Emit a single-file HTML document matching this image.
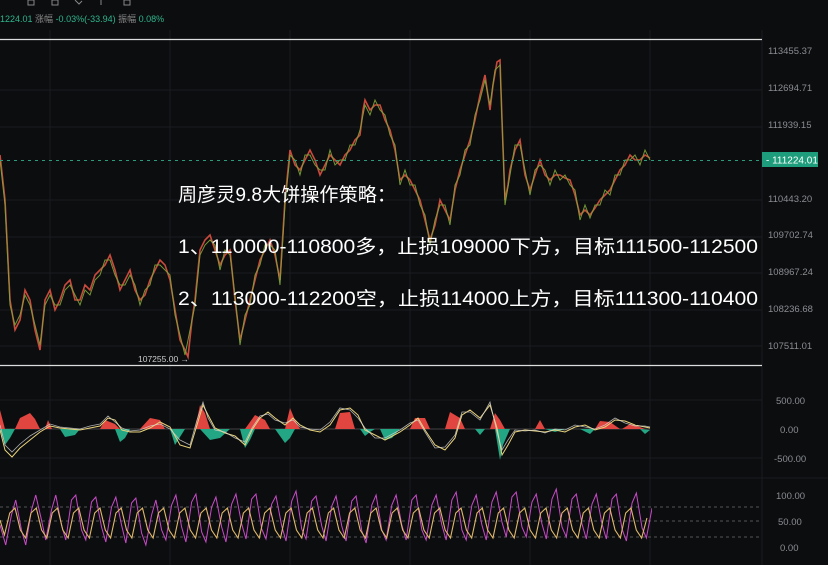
<!DOCTYPE html>
<html><head><meta charset="utf-8"><style>
html,body{margin:0;padding:0;background:#0c0d0f;width:828px;height:565px;overflow:hidden}
svg{display:block}
</style></head><body>
<svg width="828" height="565" viewBox="0 0 828 565" xmlns="http://www.w3.org/2000/svg" font-family="Liberation Sans, Noto Sans CJK SC, sans-serif">
<rect width="828" height="565" fill="#0c0d0f"/>
<g stroke="#1a1c20" stroke-width="1">
<line x1="50" y1="30" x2="50" y2="565"/><line x1="170" y1="30" x2="170" y2="565"/><line x1="290" y1="30" x2="290" y2="565"/><line x1="410" y1="30" x2="410" y2="565"/><line x1="530" y1="30" x2="530" y2="565"/><line x1="650" y1="30" x2="650" y2="565"/>
<line x1="0" y1="90" x2="762" y2="90"/><line x1="0" y1="127" x2="762" y2="127"/><line x1="0" y1="200" x2="762" y2="200"/><line x1="0" y1="237" x2="762" y2="237"/><line x1="0" y1="273" x2="762" y2="273"/><line x1="0" y1="310" x2="762" y2="310"/><line x1="0" y1="346" x2="762" y2="346"/>
<line x1="0" y1="400" x2="762" y2="400"/><line x1="0" y1="458" x2="762" y2="458"/><line x1="0" y1="478" x2="828" y2="478"/>
<line x1="762" y1="30" x2="762" y2="565"/>
</g>
<g stroke="#888" fill="none" stroke-width="1">
<rect x="28" y="0" width="6" height="5"/><rect x="52" y="0" width="6" height="5"/><path d="M75 0 l4 4 l3 -3"/><line x1="101" y1="0" x2="101" y2="5"/><rect x="124" y="0" width="6" height="5"/>
</g>
<text x="0" y="22" font-size="9" fill="#2fb58c">1224.01 <tspan fill="#888">涨幅</tspan> -0.03%(-33.94) <tspan fill="#888">振幅</tspan> 0.08%</text>
<line x1="0" y1="39.5" x2="762" y2="39.5" stroke="#ddd" stroke-width="1.2"/>
<line x1="0" y1="365.5" x2="762" y2="365.5" stroke="#ddd" stroke-width="1.2"/>
<polyline fill="none" stroke="#c84a3c" stroke-width="1.6" points="0,155 5,200 10,300 15,330 20,320 25,290 30,300 35,330 40,350 45,300 50,290 55,310 60,300 65,285 70,280 75,300 80,300 85,285 90,290 95,275 100,270 105,265 110,255 115,270 120,290 125,280 130,270 135,290 140,300 145,295 150,280 155,270 160,260 165,265 170,280 175,310 180,340 185,350 188,357 192,320 195,300 200,250 205,240 210,235 215,250 220,265 225,255 230,250 235,300 240,340 245,320 250,300 255,280 260,260 265,250 270,240 275,255 280,280 285,200 290,150 295,165 300,170 305,160 310,150 315,160 320,175 325,165 330,155 335,160 340,165 345,155 350,150 355,140 360,135 363,110 365,100 370,110 375,105 380,105 385,120 390,130 395,150 400,180 405,175 410,180 415,190 420,200 425,220 430,240 435,225 440,200 445,210 450,220 455,190 460,170 465,155 470,140 475,120 480,95 485,75 490,110 493,85 497,62 500,60 502,120 505,200 508,185 510,170 515,150 520,140 525,175 530,190 535,175 540,160 545,175 550,180 555,175 560,175 565,178 570,180 575,195 580,215 585,210 590,215 595,208 600,200 605,195 610,190 615,180 620,170 625,165 630,155 635,160 640,160 645,155 650,158"/>
<polyline fill="none" stroke="#7fa53a" stroke-width="1" opacity="0.9" points="0,160 5,205 10,305 15,325 20,315 25,295 30,305 35,325 40,345 45,305 50,295 55,305 60,305 65,290 70,285 75,295 80,305 85,290 90,295 95,280 100,275 105,260 110,260 115,275 120,285 125,285 130,275 135,285 140,305 145,290 150,285 155,265 160,265 165,270 170,275 175,315 180,335 185,355 190,330 195,305 200,255 205,245 210,240 215,245 220,270 225,250 230,255 235,295 240,345 245,315 250,305 255,275 260,265 265,245 270,245 275,250 280,285 285,205 290,155 295,160 300,175 305,155 310,155 315,165 320,170 325,170 330,150 335,165 340,160 345,160 350,145 355,145 360,130 365,105 370,115 375,100 380,110 385,115 390,135 395,145 400,185 405,170 410,185 415,185 420,205 425,215 430,245 435,220 440,205 445,205 450,225 455,185 460,175 465,150 470,145 475,115 480,100 485,80 490,105 495,70 500,65 505,205 510,175 515,145 520,145 525,170 530,195 535,170 540,165 545,170 550,185 555,170 560,180 565,175 570,185 575,190 580,220 585,205 590,218 595,205 600,205 605,190 610,195 615,175 620,175 625,160 630,160 635,155 640,165 645,150 650,160"/>
<line x1="0" y1="160.5" x2="762" y2="160.5" stroke="#2a9c7e" stroke-dasharray="3,4"/>
<rect x="762" y="152" width="56" height="15" fill="#1d9d7b"/>
<text x="766" y="163.5" font-size="10" fill="#fff">- 111224.01</text>
<g font-size="9.5" fill="#8a8d92">
<text x="768" y="54">113455.37</text><text x="768" y="91">112694.71</text><text x="768" y="128">111939.15</text><text x="768" y="202">110443.20</text><text x="768" y="238">109702.74</text><text x="768" y="275">108967.24</text><text x="768" y="312">108236.68</text><text x="768" y="349">107511.01</text>
<text x="776" y="404">500.00</text><text x="780" y="433">0.00</text><text x="774" y="462">-500.00</text>
<text x="776" y="499">100.00</text><text x="778" y="525">50.00</text><text x="780" y="551">0.00</text>
</g>
<text x="138" y="362" font-size="8.5" fill="#ccc">107255.00 →</text>
<g fill="#fff" font-size="19">
<text x="178" y="201" textLength="218" lengthAdjust="spacingAndGlyphs">周彦灵9.8大饼操作策略：</text>
<text x="178" y="253" textLength="580" lengthAdjust="spacingAndGlyphs">1、110000-110800多，止损109000下方，目标111500-112500</text>
<text x="178" y="305" textLength="580" lengthAdjust="spacingAndGlyphs">2、113000-112200空，止损114000上方，目标111300-110400</text>
</g>
<line x1="0" y1="429" x2="650" y2="429" stroke="#444"/>
<path fill="#e0453f" d="M0,429 L0,410 L5,429 Z M15,429 L20,418 L30,413 L35,419 L40,429 Z M45,429 L48,420 L52,429 Z M100,429 L105,420 L115,424 L120,429 Z M140,429 L150,418 L160,420 L165,429 Z M195,429 L200,405 L205,413 L210,429 Z M245,429 L255,415 L265,420 L270,429 Z M285,429 L290,408 L295,420 L300,429 Z M335,429 L340,413 L350,412 L355,429 Z M410,429 L415,418 L425,418 L430,429 Z M445,429 L450,412 L460,418 L465,429 Z M490,429 L495,413 L500,420 L505,429 Z M535,429 L540,420 L545,429 Z M595,429 L600,421 L610,422 L620,429 Z M622,429 L630,424 L640,427 L645,429 Z"/>
<path fill="#22a684" d="M0,429 L5,445 L10,438 L15,429 Z M60,429 L65,437 L75,435 L80,429 Z M115,429 L120,442 L125,438 L130,429 Z M170,429 L175,445 L180,437 L185,429 Z M200,429 L210,440 L220,438 L230,429 Z M240,429 L245,448 L250,440 L255,429 Z M275,429 L285,443 L290,438 L295,429 Z M360,429 L365,436 L370,432 L375,429 Z M380,429 L385,440 L392,438 L400,429 Z M475,429 L480,435 L485,429 Z M495,429 L500,460 L503,445 L510,429 Z M545,429 L555,432 L565,429 Z M580,429 L590,434 L595,429 Z M640,429 L645,434 L650,430 Z"/>
<polyline fill="none" stroke="#e8d27a" stroke-width="1" points="0,430 5,450 12,457 20,448 30,440 40,432 50,426 60,428 70,429 80,430 90,428 100,426 108,418 115,420 122,430 130,432 140,432 150,428 160,422 170,427 180,445 190,448 197,425 203,405 208,415 215,428 225,433 235,436 245,445 252,430 260,418 268,412 275,418 285,425 293,418 300,425 310,430 320,432 330,425 340,410 350,408 358,415 365,430 375,435 385,440 400,432 410,425 418,418 425,430 435,445 445,450 455,438 462,415 470,410 480,418 490,405 497,428 502,455 508,445 515,432 525,430 535,431 545,432 555,430 565,432 575,427 585,425 595,430 605,427 615,420 625,421 635,425 645,427 650,428"/>
<polyline fill="none" stroke="#d6d6d6" stroke-width="0.8" opacity="0.8" points="0,425 5,445 12,452 20,444 30,436 40,430 50,424 60,427 70,428 80,429 90,426 100,424 108,416 115,422 122,428 130,431 140,430 150,426 160,424 170,429 180,440 190,445 197,420 203,402 208,418 215,430 225,432 235,438 245,442 252,428 260,416 268,414 275,420 285,423 293,420 300,427 310,429 320,430 330,422 340,408 350,410 358,418 365,428 375,438 385,438 400,430 410,423 418,420 425,432 435,448 445,447 455,435 462,412 470,412 480,420 490,402 497,432 502,450 508,440 515,430 525,431 535,430 545,433 555,429 565,430 575,425 585,427 595,429 605,425 615,418 625,423 635,426 645,426 650,427"/>
<g stroke="#555" stroke-dasharray="3,3"><line x1="0" y1="507" x2="762" y2="507"/><line x1="0" y1="521" x2="762" y2="521"/><line x1="0" y1="537" x2="762" y2="537"/></g>
<clipPath id="c"><rect x="0" y="470" width="652" height="95"/></clipPath>
<g clip-path="url(#c)">
<path transform="scale(1.43,1)" vector-effect="non-scaling-stroke" fill="none" stroke="#c84ac8" stroke-width="1" d="M0,525 l4,20 l4,-30 l3,-15 l4,30 l3,15 l4,-35 l3,-15 l4,25 l3,20 l4,-30 l3,-15 l4,30 l3,15 l4,-40 l3,-5 l4,35 l3,10 l4,-38 l3,-5 l4,30 l3,15 l4,-35 l3,-10 l4,28 l3,18 l4,-40 l3,-5 l4,35 l3,12 l4,-30 l3,-15 l4,30 l3,10 l4,-35 l3,-10 l4,32 l3,15 l4,-40 l3,-8 l4,38 l3,10 l4,-35 l3,-10 l4,30 l3,15 l4,-38 l3,-10 l4,30 l3,15 l4,-40 l3,-5 l4,35 l3,10 l4,-35 l3,-8 l4,30 l3,15 l4,-40 l3,-10 l4,38 l3,10 l4,-38 l3,-5 l4,30 l3,15 l4,-35 l3,-10 l4,30 l3,15 l4,-40 l3,-5 l4,35 l3,12 l4,-38 l3,-10 l4,35 l3,10 l4,-35 l3,-10 l4,30 l3,15 l4,-40 l3,-5 l4,35 l3,10 l4,-35 l3,-10 l4,30 l3,15 l4,-40 l3,-8 l4,38 l3,10 l4,-35 l3,-10 l4,30 l3,15 l4,-38 l3,-10 l4,30 l3,15 l4,-40 l3,-5 l4,35 l3,10 l4,-35 l3,-8 l4,30 l3,15 l4,-40 l3,-10 l4,38 l3,10 l4,-38 l3,-5 l4,30 l3,15 l4,-35 l3,-10 l4,30 l3,15 l4,-40 l3,-5 l4,35 l3,12 l4,-38 l3,-10 l4,35 l3,10 l4,-30"/>
<path transform="scale(0.885,1)" vector-effect="non-scaling-stroke" fill="none" stroke="#e0b86a" stroke-width="1.1" d="M0,520 l5,15 l6,-22 l6,-5 l6,22 l6,8 l6,-25 l6,-5 l6,22 l6,8 l6,-25 l6,-5 l6,22 l6,8 l6,-25 l6,-5 l6,22 l6,8 l6,-25 l6,-5 l6,22 l6,8 l6,-25 l6,-5 l6,22 l6,8 l6,-25 l6,-5 l6,22 l6,8 l6,-25 l6,-5 l6,22 l6,8 l6,-25 l6,-5 l6,22 l6,8 l6,-25 l6,-5 l6,22 l6,8 l6,-25 l6,-5 l6,22 l6,8 l6,-25 l6,-5 l6,22 l6,8 l6,-25 l6,-5 l6,22 l6,8 l6,-25 l6,-5 l6,22 l6,8 l6,-25 l6,-5 l6,22 l6,8 l6,-25 l6,-5 l6,22 l6,8 l6,-25 l6,-5 l6,22 l6,8 l6,-25 l6,-5 l6,22 l6,8 l6,-25 l6,-5 l6,22 l6,8 l6,-25 l6,-5 l6,22 l6,8 l6,-25 l6,-5 l6,22 l6,8 l6,-25 l6,-5 l6,22 l6,8 l6,-25 l6,-5 l6,22 l6,8 l6,-25 l6,-5 l6,22 l6,8 l6,-25 l6,-5 l6,22 l6,8 l6,-25 l6,-5 l6,22 l6,8 l6,-25 l6,-5 l6,22 l6,8 l6,-25 l6,-5 l6,22 l6,8 l6,-25 l6,-5 l6,22 l6,8 l6,-25 l6,-5 l6,22 l6,8 l6,-20"/>
</g>
</svg>
</body></html>
